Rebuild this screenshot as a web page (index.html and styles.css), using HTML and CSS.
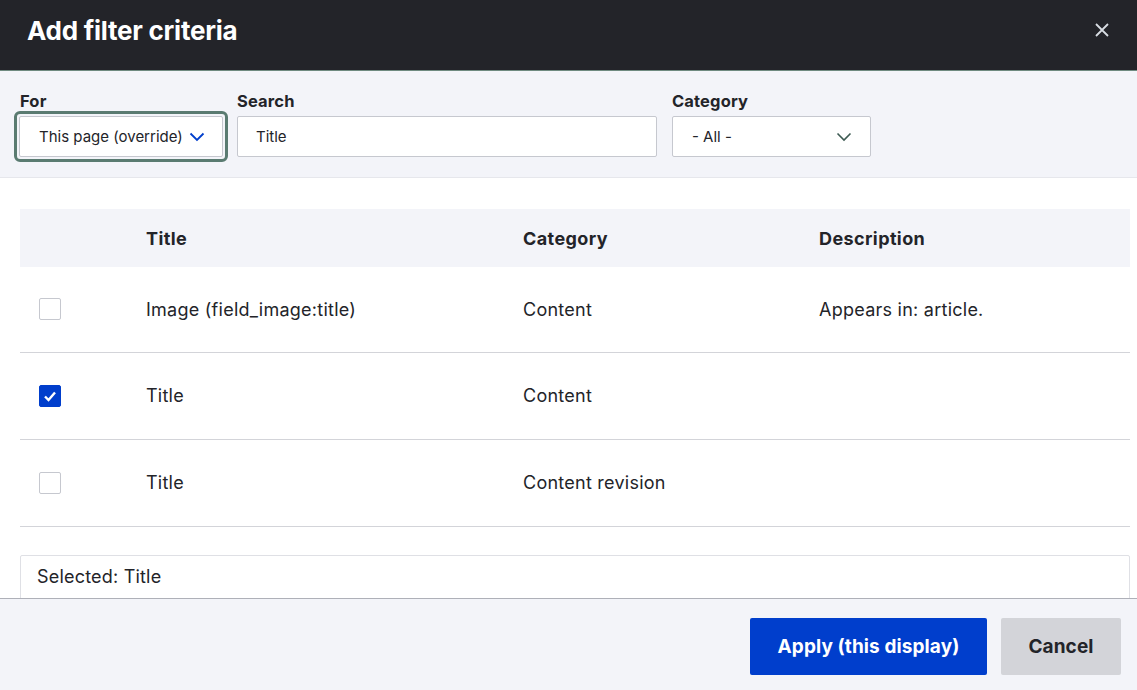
FILE: index.html
```html
<!DOCTYPE html>
<html>
<head>
<meta charset="utf-8">
<link rel="stylesheet" href="styles.css">
</head>
<body>
<div class="dialog">
  <header class="titlebar">
    <h1 class="title">Add filter criteria</h1>
    <button class="close" aria-label="Close">
      <svg width="16" height="16" viewBox="0 0 16 16"><path d="M2 2 L14 14 M14 2 L2 14" stroke="#d8dde3" stroke-width="1.8" fill="none"/></svg>
    </button>
  </header>
  <div class="filters">
    <div class="field field-for">
      <label class="label">For</label>
      <div class="focus-ring">
        <div class="select select-for"><span>This page (override)</span>
          <svg class="chev" width="16" height="10" viewBox="0 0 16 10"><path d="M1.5 1.5 L8 8 L14.5 1.5" stroke="#003ecc" stroke-width="1.8" fill="none"/></svg>
        </div>
      </div>
    </div>
    <div class="field field-search">
      <label class="label">Search</label>
      <div class="input input-search">Title</div>
    </div>
    <div class="field field-cat">
      <label class="label">Category</label>
      <div class="select select-cat"><span>- All -</span>
        <svg class="chev" width="16" height="10" viewBox="0 0 16 10"><path d="M1.5 1.5 L8 8 L14.5 1.5" stroke="#3d5a52" stroke-width="1.6" fill="none"/></svg>
      </div>
    </div>
  </div>
  <div class="content">
    <table class="table">
      <thead>
        <tr><th class="c-check"></th><th class="c-title">Title</th><th class="c-cat">Category</th><th>Description</th></tr>
      </thead>
      <tbody>
        <tr><td class="c-check"><span class="cb"></span></td><td>Image (field_image:title)</td><td>Content</td><td>Appears in: article.</td></tr>
        <tr><td class="c-check"><span class="cb checked"><svg width="14" height="12" viewBox="0 0 14 12"><path d="M2 6.5 L5.5 10 L12 2.5" stroke="#fff" stroke-width="2.4" fill="none"/></svg></span></td><td>Title</td><td>Content</td><td></td></tr>
        <tr><td class="c-check"><span class="cb"></span></td><td>Title</td><td>Content revision</td><td></td></tr>
      </tbody>
    </table>
    <div class="selected">Selected: Title</div>
  </div>
  <footer class="footer">
    <button class="btn btn-primary">Apply (this display)</button>
    <button class="btn btn-secondary">Cancel</button>
  </footer>
</div>
</body>
</html>
```
FILE: styles.css
```css
* { box-sizing: border-box; }
html, body { margin: 0; padding: 0; }
body {
  font-family: Inter, "Noto Sans", sans-serif;
  color: #232429;
  background: #fff;
  width: 1137px;
  height: 690px;
  overflow: hidden;
}
.dialog { display: flex; flex-direction: column; height: 690px; }
.titlebar {
  height: 71px;
  flex: none;
  background: #232429;
  border-bottom: 1px solid #6f8a80;
  display: flex;
  align-items: center;
  justify-content: space-between;
  padding: 0 27px 0 27px;
}
.title {
  margin: 0;
  color: #fff;
  font-size: 26px;
  font-weight: 700;
  letter-spacing: -0.25px;
  line-height: 1;
  padding-bottom: 8px;
}
.close {
  background: none; border: 0; padding: 0; margin: 0 0 10px 0;
  width: 16px; height: 16px; display: flex;
}
.filters {
  flex: none;
  background: #f3f4f9;
  height: 107px;
  display: flex;
  padding: 20px 0 0 14px;
  border-bottom: 1px solid #e6e7ec;
}
.field { display: flex; flex-direction: column; }
.label {
  font-size: 16.5px;
  font-weight: 700;
  line-height: 20px;
  margin-bottom: 5px;
  letter-spacing: 0.15px;
}
.field-for .label { margin-left: 6px; margin-bottom: 0; }
.field-search { margin-left: 9px; }
.field-cat { margin-left: 15px; }
.focus-ring {
  border: 3px solid #5a7b71;
  border-radius: 6px;
  padding: 2px;
  background: #f3f4f9;
}
.select, .input {
  height: 41px;
  background: #fff;
  border: 1px solid #c6c8cf;
  border-radius: 2px;
  font-size: 15px;
  display: flex;
  align-items: center;
  padding-left: 18px;
  color: #232429;
}
.select-for { width: 204px; justify-content: space-between; padding-right: 17px; padding-left: 19px; }
.input-search { width: 420px; }
.select-cat { width: 199px; justify-content: space-between; padding-right: 18px; padding-left: 19px; }
.chev { flex: none; }
.content {
  flex: 1;
  background: #fff;
  padding: 31px 7px 0 20px;
  overflow: hidden;
}
.table {
  width: 100%;
  border-collapse: collapse;
  font-size: 18px;
  letter-spacing: 0.25px;
}
.table th {
  background: #f3f4f9;
  height: 58px;
  text-align: left;
  font-weight: 700;
  padding: 0;
  letter-spacing: 0.4px;
}
.table tbody tr:first-child td { height: 85px; }
.table td {
  height: 87px;
  padding: 0;
  border-bottom: 1px solid #d3d4d9;
}
.c-check { width: 126px; }
.c-title { width: 377px; }
.c-cat { width: 296px; }
td.c-check { padding-left: 19px !important; }
.cb {
  display: flex;
  align-items: center;
  justify-content: center;
  width: 22px; height: 22px;
  border: 1px solid #c6c8cf;
  border-radius: 2px;
  background: #fff;
}
.cb.checked { background: #003ecc; border-color: #003ecc; }
.selected {
  margin-top: 28px;
  border: 1px solid #dfe0e5;
  border-radius: 2px;
  height: 50px;
  padding: 10px 16px;
  font-size: 18px;
  letter-spacing: 0.2px;
}
.footer {
  flex: none;
  height: 92px;
  background: #f3f4f9;
  border-top: 1px solid #aeb0b8;
  display: flex;
  justify-content: flex-end;
  align-items: flex-start;
  gap: 14px;
  padding: 19px 16px 0 0;
}
.btn {
  height: 57px;
  border: 0;
  border-radius: 2px;
  font-family: inherit;
  font-size: 19px;
  font-weight: 700;
  padding: 0;
  letter-spacing: 0.1px;
}
.btn-primary { background: #003ecc; color: #fff; width: 237px; }
.btn-secondary { background: #d3d4d9; color: #232429; width: 120px; }
```
